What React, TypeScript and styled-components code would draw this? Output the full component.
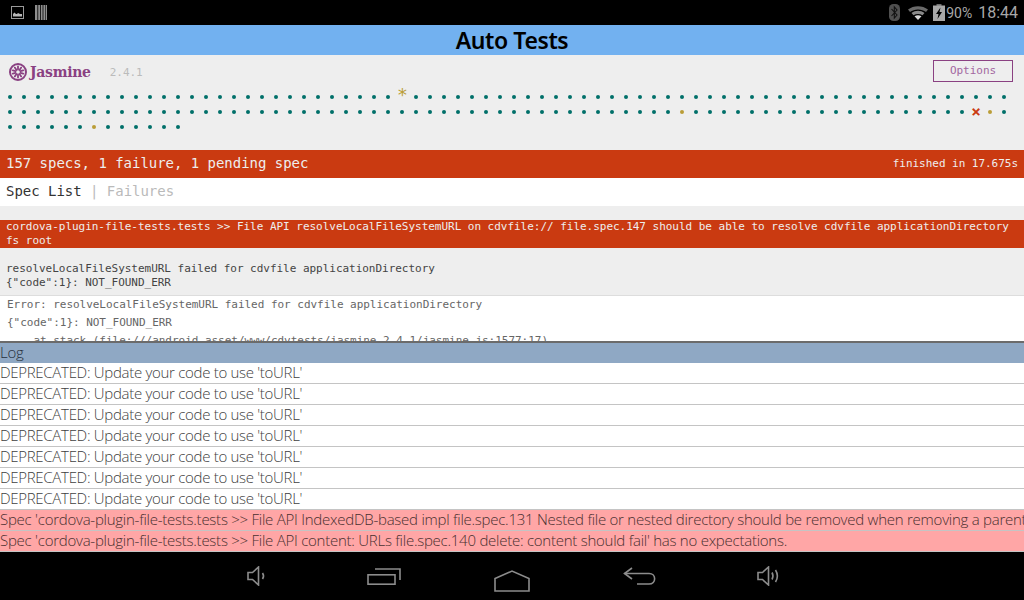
import React from 'react'
import styled, { createGlobalStyle } from 'styled-components'

const mono = `"DejaVu Sans Mono", "Liberation Mono", monospace`
const light = `"Open Sans", Roboto, sans-serif`

const GlobalStyle = createGlobalStyle`
  html, body {
    margin: 0;
    padding: 0;
    background: #000;
  }
  * {
    box-sizing: border-box;
  }
`

const Screen = styled.div`
  width: 1024px;
  height: 600px;
  display: flex;
  flex-direction: column;
  overflow: hidden;
  background: #000;
`

const StatusBar = styled.div`
  height: 25px;
  flex: none;
  display: flex;
  align-items: center;
  background: #000;
  color: #a8a8a8;
  padding: 0 6px 0 11px;
`

const StatusLeft = styled.div`
  display: flex;
  align-items: center;
  gap: 11px;
  flex: 1;
`

const StatusRight = styled.div`
  display: flex;
  align-items: center;
`

const Percent = styled.span`
  font: 400 14px Roboto, sans-serif;
  margin-left: 1px;
`

const Clock = styled.span`
  font: 400 16px Roboto, sans-serif;
  margin-left: 6px;
`

const TitleBar = styled.div`
  height: 30px;
  flex: none;
  background: #72b1f0;
  color: #000;
  font: 600 23px/31px "Noto Sans", sans-serif;
  letter-spacing: -0.4px;
  text-align: center;
`

const Report = styled.div`
  height: 286px;
  flex: none;
  overflow: hidden;
  background: #eee;
  font-family: ${mono};
  letter-spacing: -0.025px;
`

const Banner = styled.div`
  height: 35px;
  display: flex;
  align-items: flex-start;
  padding: 5px 11px 0 8px;
`

const Logo = styled.div`
  display: flex;
  align-items: center;
  gap: 2px;
  height: 24px;
  color: #8a4182;
  font: 700 14px "DejaVu Serif", serif;
  letter-spacing: -0.3px;
`

const Version = styled.span`
  margin: 6px 0 0 19px;
  font-size: 11px;
  line-height: 13px;
  color: #bbb;
  flex: 1;
`

const OptionsButton = styled.div`
  width: 80px;
  height: 22px;
  border: 1.5px solid #8a4182;
  color: #a266a0;
  font-size: 11px;
  line-height: 19px;
  text-align: center;
`

const Symbols = styled.ul`
  list-style: none;
  margin: 0;
  padding: 0 0 0 3px;
  height: 60px;
  display: flex;
  flex-wrap: wrap;
  align-content: flex-start;
`

const statusColor = { passed: '#007069', pending: '#ba9d37', failed: '#ca3a11' }

type Status = keyof typeof statusColor

const Symbol = styled.li<{ $status: Status }>`
  width: 14px;
  height: 15px;
  display: flex;
  justify-content: center;
  position: relative;
  padding-top: 5px;
  color: ${p => statusColor[p.$status]};
`

const Dot = styled.span`
  width: 4px;
  height: 4px;
  border-radius: 50%;
  background: currentColor;
`

const Star = styled.span`
  position: absolute;
  left: 1px;
  right: 0;
  top: -3px;
  text-align: center;
  font-size: 18px;
  line-height: 15px;
`

const Cross = styled.span`
  position: absolute;
  left: 0;
  right: 0;
  top: 0;
  text-align: center;
  font-size: 16px;
  font-weight: 700;
  line-height: 14px;
`

const SummaryBar = styled.div`
  height: 28px;
  background: #ca3a11;
  color: #eee;
  padding: 0 6px 2px;
  display: flex;
  align-items: center;
  justify-content: space-between;
  font-size: 14px;
  letter-spacing: -0.03px;
`

const Duration = styled.span`
  font-size: 11px;
`

const Menu = styled.div`
  height: 28px;
  background: #fff;
  padding: 0 6px;
  font-size: 14px;
  line-height: 27px;
  white-space: pre;
`

const MenuLink = styled.span<{ $muted?: boolean }>`
  color: ${p => (p.$muted ? '#bababa' : '#333')};
`

const FailureTitle = styled.div`
  margin-top: 14px;
  height: 28px;
  background: #ca3a11;
  color: #eee;
  padding: 0 6px;
  font-size: 11px;
  line-height: 14px;
`

const FailureMessage = styled.div`
  height: 48px;
  padding: 14px 6px 0;
  font-size: 11px;
  line-height: 14px;
  color: #444;
  border-bottom: 1px solid #ddd;
`

const MessageLine = styled.div`
  white-space: pre;
`

const StackTrace = styled.div`
  background: #fff;
  height: 60px;
  padding: 0 7px;
  font-size: 11px;
  line-height: 18px;
  color: #666;
  white-space: pre;
`

const Divider = styled.div`
  height: 2px;
  flex: none;
  background: #6b6b6b;
`

const LogHeader = styled.div`
  height: 20px;
  flex: none;
  background: #8fa8c4;
  color: #26303c;
  font: 300 15px/19px ${light};
  letter-spacing: -0.3px;
`

const LogRow = styled.div<{ $error?: boolean }>`
  height: 21px;
  flex: none;
  overflow: hidden;
  white-space: nowrap;
  background: ${p => (p.$error ? '#ffa6a6' : '#fff')};
  border-bottom: 1px solid #c4c4c4;
  color: ${p => (p.$error ? '#4a3030' : '#404040')};
  font: 300 15px/19px ${light};
  letter-spacing: ${p => (p.$error ? '-0.25px' : '-0.3px')};
`

const NavBar = styled.div`
  flex: 1;
  background: #000;
  display: grid;
  grid-template-columns: repeat(5, 128px);
  justify-content: center;
  justify-items: center;
  align-items: center;
`

const NavSlot = styled.div<{ $drop?: number }>`
  display: flex;
  margin-top: ${p => p.$drop ?? 0}px;
`

const JasmineMark = () => (
  <svg width="20" height="20" viewBox="0 0 20 20" fill="none">
    <circle cx="10" cy="10" r="8" stroke="#8a4182" strokeWidth="2" />
    <g stroke="#8a4182" strokeWidth="1.8" strokeLinecap="round">
      <path d="M10 4.500v3" />
      <path d="M10 12.500v3" />
      <path d="M4.800 8.300l2.800 .9" />
      <path d="M12.400 10.800l2.800 .9" />
      <path d="M6.800 14.400l1.700-2.400" />
      <path d="M11.500 8l1.700-2.400" />
      <path d="M6.800 5.600l1.700 2.400" />
      <path d="M11.500 12l1.700 2.400" />
      <path d="M4.800 11.700l2.800-.9" />
      <path d="M12.400 9.200l2.800-.9" />
    </g>
  </svg>
)

const PictureIcon = () => (
  <svg width="13" height="13" viewBox="0 0 13 13" fill="none">
    <rect x=".5" y=".5" width="12" height="12" stroke="#9a9a9a" />
    <path d="M2 10.500V8l1.500-1.500L5 8h1l1-1 2 1h2v2.500z" fill="#b8b8b8" />
  </svg>
)

const BarcodeIcon = () => (
  <svg width="12" height="15" viewBox="0 0 12 15" fill="#8e8e8e">
    <rect x="0" y="0" width="12" height="15" />
    <rect x="2.400" y="0" width=".8" height="15" fill="#000" />
    <rect x="5" y="0" width=".8" height="15" fill="#000" />
    <rect x="7.600" y="0" width=".8" height="15" fill="#000" />
    <rect x="10" y="0" width=".6" height="15" fill="#000" />
  </svg>
)

const BluetoothIcon = () => (
  <svg width="11" height="17" viewBox="0 0 11 17" fill="none">
    <rect width="11" height="17" rx="4.500" fill="#505050" />
    <path d="M2.500 5l5.500 6-2.700 3V3l2.700 3-5.500 6" stroke="#111" strokeWidth="1.100" />
  </svg>
)

const WifiIcon = () => (
  <svg width="20" height="14" viewBox="0 0 20 14" fill="none" style={{ marginLeft: 8 }}>
    <path d="M0 3.500C5.500-1 14.500-1 20 3.500L18 6C13.500 2.500 6.500 2.500 2 6z" fill="#6a6a6a" />
    <path d="M3.500 7C7.500 4 12.500 4 16.500 7L14.500 9.200C11.800 7.500 8.200 7.500 5.500 9.200z" fill="#8a8a8a" />
    <path d="M6.500 10.300C8.800 8.900 11.200 8.900 13.500 10.300L10 14z" fill="#d8d8d8" />
  </svg>
)

const BatteryIcon = () => (
  <svg width="12" height="17" viewBox="0 0 12 17" fill="none" style={{ marginLeft: 5 }}>
    <rect x="3.500" y="0" width="5" height="2" fill="#6e6e6e" />
    <rect x="0" y="1.500" width="12" height="15.500" fill="#a8a8a8" />
    <path d="M7.500 3.500L3 10h2.500l-1 5L9 8H6.500z" fill="#000" />
  </svg>
)

const navStroke = { stroke: '#8c8c8c', strokeWidth: 1.6, fill: 'none' }

const VolumeDownIcon = () => (
  <svg width="19" height="20" viewBox="0 0 19 20" {...navStroke}>
    <path d="M1 6.500h4.500L11.500 1v18L5.500 13.500H1z" />
    <path d="M15.500 7c1.400 2 1.400 4 0 6" />
  </svg>
)

const RecentsIcon = () => (
  <svg width="34" height="17" viewBox="0 0 34 17" {...navStroke}>
    <rect x="1" y="6.800" width="27" height="9.400" />
    <path d="M8 1h25v11" />
  </svg>
)

const HomeIcon = () => (
  <svg width="36" height="22" viewBox="0 0 36 22" {...navStroke}>
    <path d="M1 21V8.500L18 1l17 7.500V21z" />
  </svg>
)

const BackIcon = () => (
  <svg width="34" height="18" viewBox="0 0 34 18" {...navStroke}>
    <path d="M9 1L1.500 6.500 9 12" />
    <path d="M1.500 6.500H26c7.500 0 7.500 10.500 0 10.500H14" />
  </svg>
)

const VolumeUpIcon = () => (
  <svg width="23" height="20" viewBox="0 0 23 20" {...navStroke}>
    <path d="M1 6.500h4.500L11.500 1v18L5.500 13.500H1z" />
    <path d="M15 6.500c1.300 2.300 1.300 4.700 0 7" />
    <path d="M18.500 4c2.500 4 2.500 8 0 12" />
  </svg>
)

const specs: Status[] = Array.from({ length: 157 }, () => 'passed' as Status)
specs[28] = 'pending'
specs[72 + 48] = 'pending'
specs[72 + 69] = 'failed'
specs[72 + 70] = 'pending'
specs[144 + 6] = 'pending'

const deprecated = "DEPRECATED: Update your code to use 'toURL'"

const App = () => (
  <>
    <GlobalStyle />
    <Screen>
      <StatusBar>
        <StatusLeft>
          <PictureIcon />
          <BarcodeIcon />
        </StatusLeft>
        <StatusRight>
          <BluetoothIcon />
          <WifiIcon />
          <BatteryIcon />
          <Percent>90%</Percent>
          <Clock>18:44</Clock>
        </StatusRight>
      </StatusBar>
      <TitleBar>Auto Tests</TitleBar>
      <Report>
        <Banner>
          <Logo>
            <JasmineMark />
            Jasmine
          </Logo>
          <Version>2.4.1</Version>
          <OptionsButton>Options</OptionsButton>
        </Banner>
        <Symbols>
          {specs.map((status, i) => (
            <Symbol key={i} $status={status}>
              {status === 'failed' ? <Cross>×</Cross> : i === 28 ? <Star>*</Star> : <Dot />}
            </Symbol>
          ))}
        </Symbols>
        <SummaryBar>
          <span>157 specs, 1 failure, 1 pending spec</span>
          <Duration>finished in 17.675s</Duration>
        </SummaryBar>
        <Menu>
          <MenuLink>Spec List</MenuLink>
          <MenuLink $muted> | Failures</MenuLink>
        </Menu>
        <FailureTitle>
          cordova-plugin-file-tests.tests &gt;&gt; File API resolveLocalFileSystemURL on cdvfile:// file.spec.147 should be able to resolve cdvfile applicationDirectory fs root
        </FailureTitle>
        <FailureMessage>
          <MessageLine>resolveLocalFileSystemURL failed for cdvfile applicationDirectory</MessageLine>
          <MessageLine>{'{"code":1}: NOT_FOUND_ERR'}</MessageLine>
        </FailureMessage>
        <StackTrace>
          {'Error: resolveLocalFileSystemURL failed for cdvfile applicationDirectory\n{"code":1}: NOT_FOUND_ERR\n    at stack (file:///android_asset/www/cdvtests/jasmine_2.4.1/jasmine.js:1577:17)'}
        </StackTrace>
      </Report>
      <Divider />
      <LogHeader>Log</LogHeader>
      {Array.from({ length: 7 }, (_, i) => (
        <LogRow key={i}>{deprecated}</LogRow>
      ))}
      <LogRow $error>
        Spec 'cordova-plugin-file-tests.tests &gt;&gt; File API IndexedDB-based impl file.spec.131 Nested file or nested directory should be removed when removing a parent directory' has no expectations.
      </LogRow>
      <LogRow $error>
        Spec 'cordova-plugin-file-tests.tests &gt;&gt; File API content: URLs file.spec.140 delete: content should fail' has no expectations.
      </LogRow>
      <NavBar>
        <NavSlot><VolumeDownIcon /></NavSlot>
        <NavSlot><RecentsIcon /></NavSlot>
        <NavSlot $drop={9}><HomeIcon /></NavSlot>
        <NavSlot><BackIcon /></NavSlot>
        <NavSlot><VolumeUpIcon /></NavSlot>
      </NavBar>
    </Screen>
  </>
)

export default App
